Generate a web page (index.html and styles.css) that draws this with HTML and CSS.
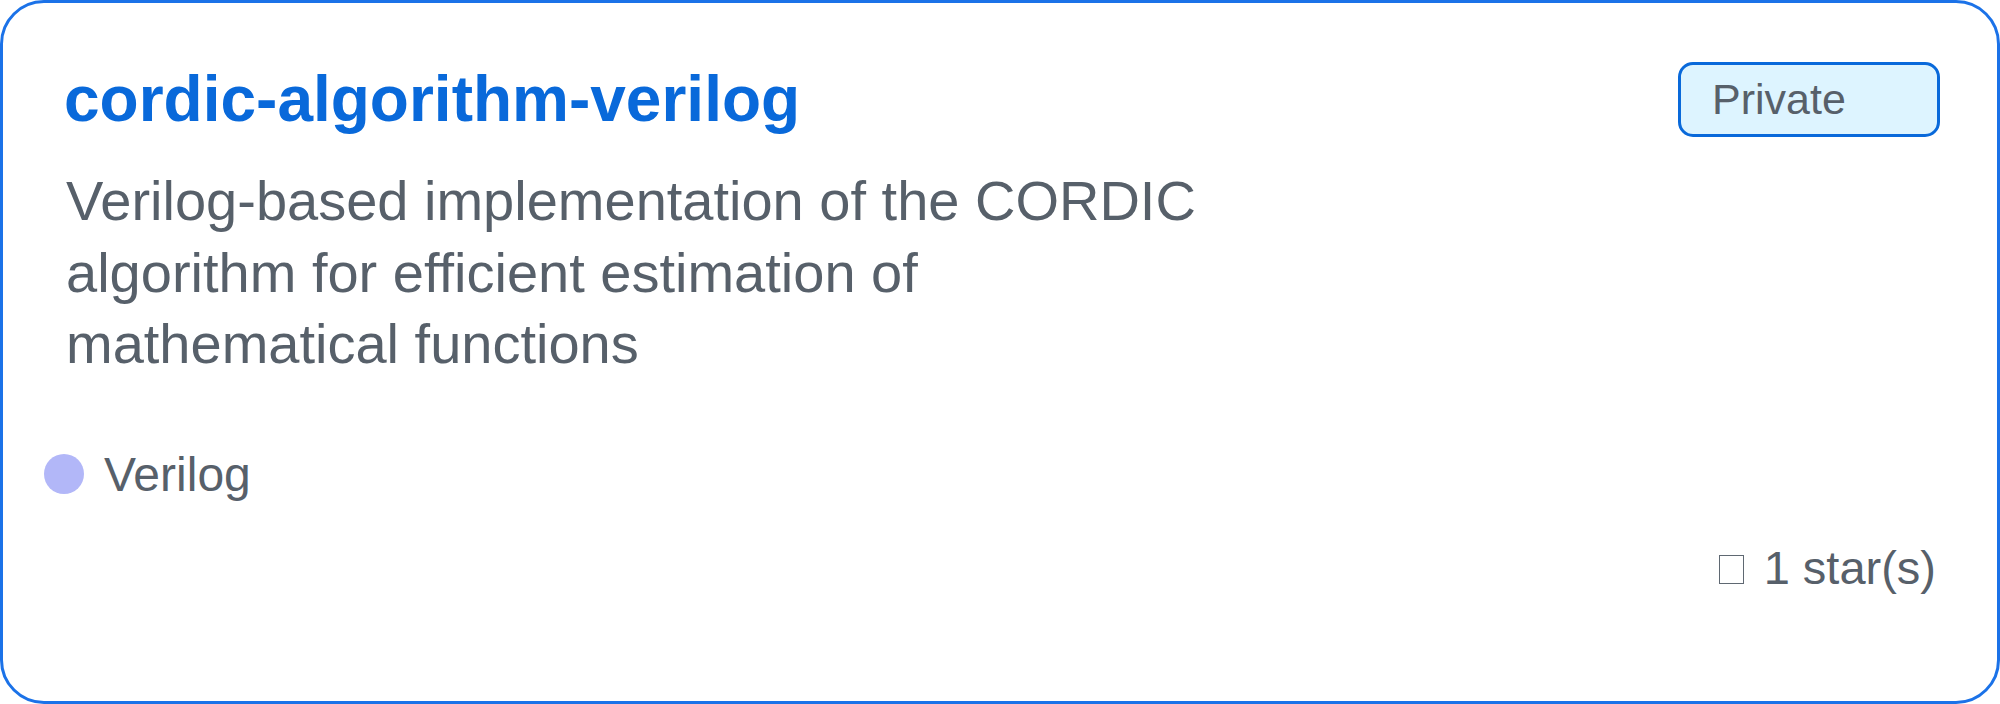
FILE: index.html
```html
<!DOCTYPE html>
<html lang="en">
<head>
<meta charset="utf-8">
<title>cordic-algorithm-verilog</title>
<link rel="stylesheet" href="styles.css">
</head>
<body>
  <article class="repo-card">
    <header class="repo-header">
      <h1 class="repo-title">cordic-algorithm-verilog</h1>
      <span class="repo-badge">Private</span>
    </header>
    <p class="repo-desc">Verilog-based implementation of the CORDIC algorithm for efficient estimation of mathematical functions</p>
    <div class="repo-lang">
      <span class="lang-dot"></span>
      <span class="lang-name">Verilog</span>
    </div>
    <div class="repo-stars">
      <span class="tofu" aria-hidden="true"></span>
      <span class="stars-text">1 star(s)</span>
    </div>
  </article>
</body>
</html>
```
FILE: styles.css
```css
html, body {
  margin: 0;
  padding: 0;
  background: #ffffff;
}

body {
  font-family: "Liberation Sans", Arial, sans-serif;
  color: #57606a;
}

.repo-card {
  box-sizing: border-box;
  width: 2000px;
  height: 704px;
  border: 3px solid #1b72e8;
  border-radius: 44px;
  padding: 59px 57px 0 61px;
  background: #ffffff;
  display: flex;
  flex-direction: column;
}

.repo-header {
  display: flex;
  justify-content: space-between;
  align-items: flex-start;
}

.repo-title {
  margin: 0;
  font-size: 64px;
  font-weight: 700;
  line-height: normal;
  color: #0969da;
}

.repo-badge {
  box-sizing: border-box;
  width: 262px;
  height: 75px;
  display: flex;
  align-items: center;
  padding-left: 31px;
  border: 3px solid #0969da;
  border-radius: 15px;
  background: #ddf4ff;
  color: #57606a;
  font-size: 43px;
  line-height: normal;
}

.repo-desc {
  margin: 28px 0 0 2px;
  max-width: 1170px;
  font-size: 56px;
  line-height: 71.5px;
  color: #57606a;
}

.repo-lang {
  display: flex;
  align-items: center;
  gap: 20px;
  margin: 67px 0 0 -20px;
  font-size: 48px;
  line-height: normal;
}

.lang-dot {
  width: 40px;
  height: 40px;
  border-radius: 50%;
  background: #b2b7f8;
  flex: none;
}

.repo-stars {
  display: flex;
  align-items: baseline;
  justify-content: flex-end;
  margin: 38px 4px 0 0;
  font-size: 47px;
  line-height: normal;
}

.tofu {
  display: inline-block;
  box-sizing: border-box;
  width: 25px;
  height: 29px;
  border: 1.5px solid #5f6872;
  margin-right: 20px;
}
```
